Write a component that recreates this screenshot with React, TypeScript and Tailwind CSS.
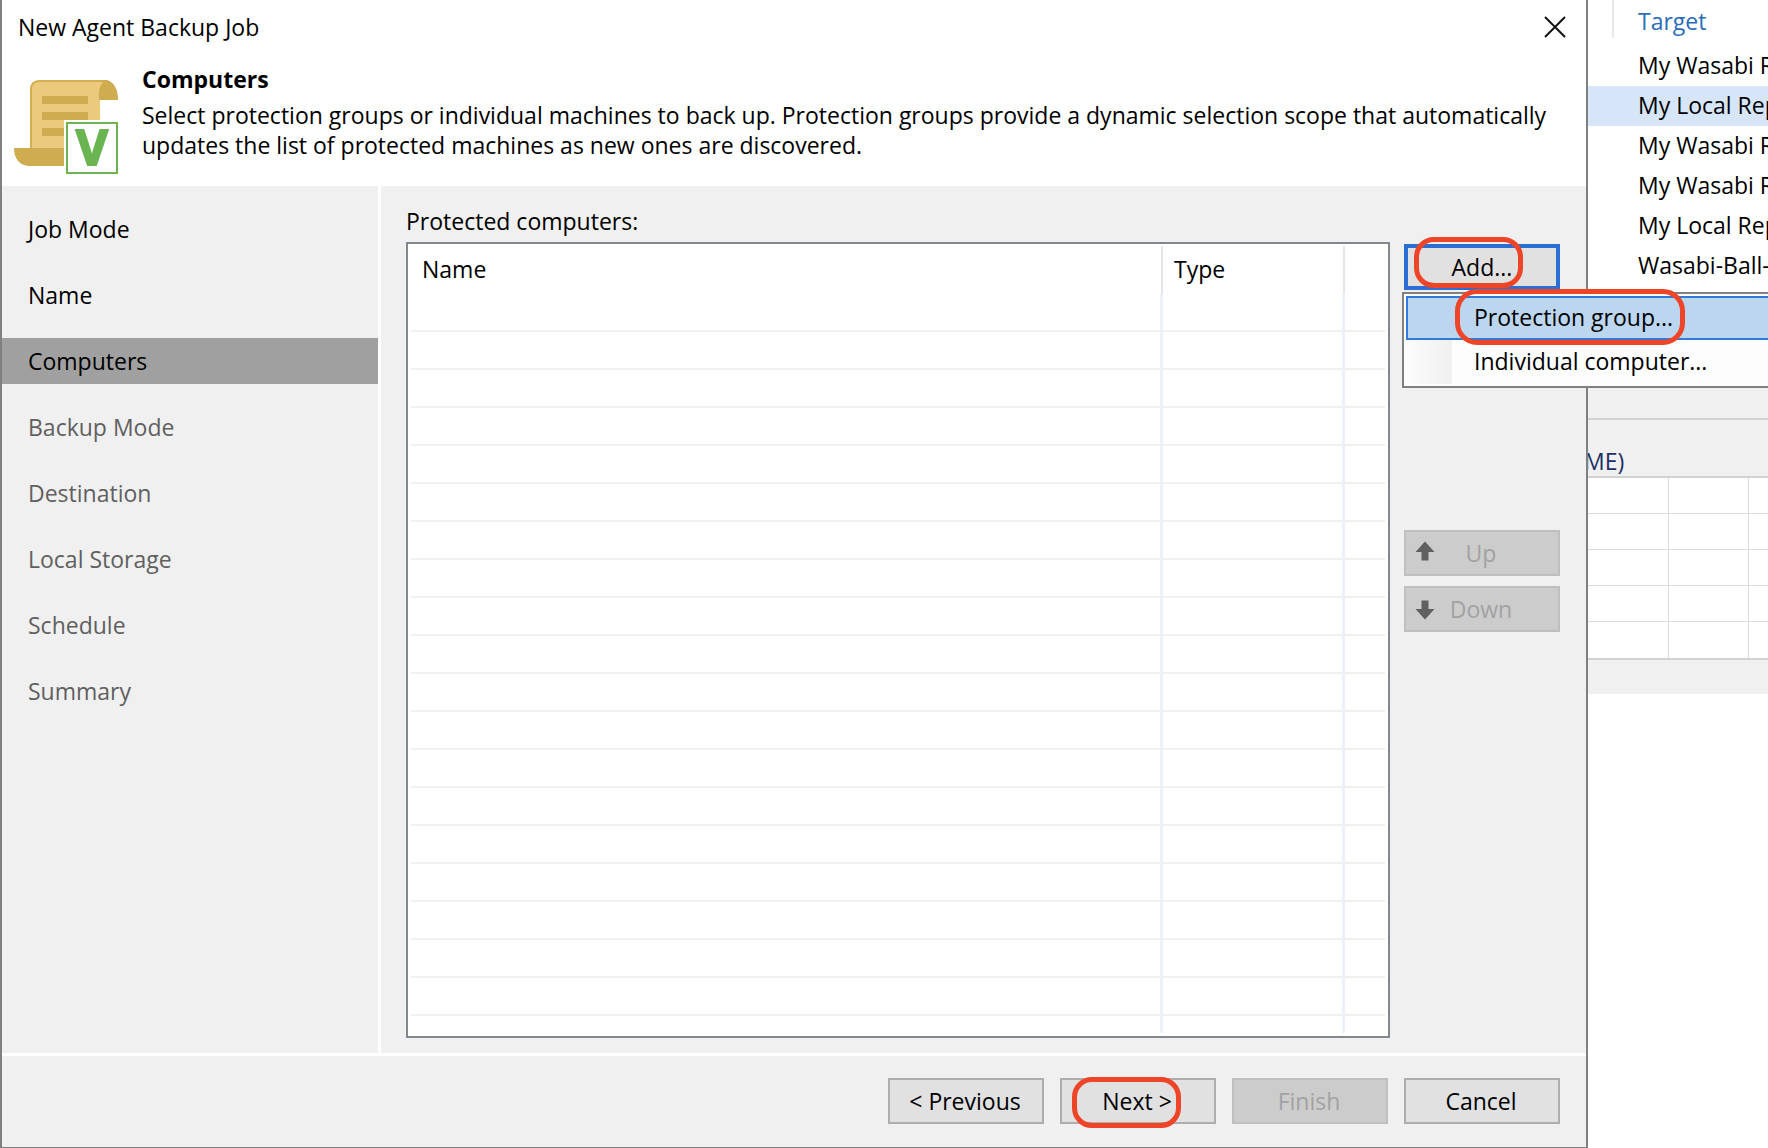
import React from "react";

/* ---------- Data ---------- */
const STEPS = [
  { label: "Job Mode", state: "done" },
  { label: "Name", state: "done" },
  { label: "Computers", state: "active" },
  { label: "Backup Mode", state: "todo" },
  { label: "Destination", state: "todo" },
  { label: "Local Storage", state: "todo" },
  { label: "Schedule", state: "todo" },
  { label: "Summary", state: "todo" },
];

const TARGETS = [
  { id: 1, name: "My Wasabi R" },
  { id: 2, name: "My Local Rep", selected: true },
  { id: 3, name: "My Wasabi R" },
  { id: 4, name: "My Wasabi R" },
  { id: 5, name: "My Local Rep" },
  { id: 6, name: "Wasabi-Ball-" },
];

const EMPTY_ROWS = Array.from({ length: 19 }, (_, i) => i);
const CHART_ROWS = Array.from({ length: 5 }, (_, i) => i);

const stepStyles: Record<string, string> = {
  done: "text-black",
  active: "bg-[#a0a0a0] text-black",
  todo: "text-[#606060]",
};

/* ---------- Icons ---------- */
const JobIcon = () => (
  <svg width="106" height="96" viewBox="14 80 106 96" aria-hidden="true">
    <path d="M30 149V90Q30 80 40 80H108L100 98V149Z" fill="#ebc97d" />
    <path d="M31 149V90Q31 81 40 81H106" fill="none" stroke="#d3ae52" strokeWidth="2" />
    <path d="M99 100C98 90 100 82 107 80C114 82 118 89 118 100Z" fill="#d0ac50" />
    <path d="M14 148H68V166H28C19 165 14 158 14 148Z" fill="#d0ac50" />
    <path d="M42 96H88V104H42ZM42 112H88V120H42ZM42 128H88V136H42Z" fill="#d0ac50" />
    <path d="M64 120H120V176H64Z" fill="#fff" />
    <path d="M67 123H117V173H67Z" fill="#fff" stroke="#6ab551" strokeWidth="2" />
    <text x="92" y="165" textAnchor="middle" fill="#6ab551" stroke="#6ab551" strokeWidth="2" fontSize="49" fontWeight="700" fontFamily="Open Sans, sans-serif">V</text>
  </svg>
);

const ArrowIcon = ({ down = false }: { down?: boolean }) => (
  <svg className={down ? "absolute left-[9px] top-3 rotate-180" : "absolute left-[9px] top-[9px]"} width="20" height="20" viewBox="0 0 20 20" aria-hidden="true">
    <path d="M10 0.5L19.5 11H13.5V19.5H6.5V11H0.5Z" fill="#606060" />
  </svg>
);

/* ---------- Buttons ---------- */
const DialogButton = ({ children, disabled = false }: { children: React.ReactNode; disabled?: boolean }) => (
  <button
    type="button"
    disabled={disabled}
    className="relative flex h-[46px] w-[156px] shrink-0 items-center justify-center border-2 border-[#adadad] bg-[#e1e1e1] pr-[2px] disabled:border-[#bfbfbf] disabled:bg-[#cccccc] disabled:text-[#a2a2a2]"
  >
    {children}
  </button>
);

const AddMenu = () => (
  <div role="menu" className="absolute -left-[2px] top-12 z-20 w-[400px] border-2 border-[#808080] bg-[#fdfdfd] p-[2px]">
    <button type="button" role="menuitem" className="relative flex h-11 w-full items-center border-2 border-[#2f7bd6] bg-[#bcd6f0] pb-[2px] pl-[66px]">
      Protection group...
      <span className="absolute -top-[9px] left-[47px] h-14 w-[230px] rounded-[22px] border-5 border-[#ee4427]" />
    </button>
    <button type="button" role="menuitem" className="flex h-11 w-full items-center">
      <span className="mr-[22px] h-11 w-[46px] bg-linear-to-r from-[#fcfcfc] to-[#f0f0f0]" />
      <span className="pb-[2px]">Individual computer...</span>
    </button>
  </div>
);

/* ---------- Computers list ---------- */
const ComputersTable = () => (
  <div className="border-2 border-[#828790] bg-white px-[3px] pb-[3px] pt-[2px]">
    <table aria-labelledby="protected-label" className="w-full table-fixed border-separate border-spacing-0 text-left">
      <thead>
        <tr className="h-12">
          <th className="border-r-2 border-[#e5e5e5] pl-[11px] pb-[2px] font-normal">Name</th>
          <th className="w-[182px] border-r-2 border-[#e5e5e5] pl-[11px] pb-[2px] font-normal">Type</th>
          <th className="w-10" />
        </tr>
      </thead>
      <tbody>
        {EMPTY_ROWS.map((row) => (
          <tr key={row} className="h-[38px]">
            <td className="border-b-2 border-r-3 border-b-[#f0f0f0] border-r-[#ecf0f8]" />
            <td className="border-b-2 border-r-3 border-b-[#f0f0f0] border-r-[#ecf0f8]" />
            <td className="border-b-2 border-b-[#f0f0f0]" />
          </tr>
        ))}
        <tr className="h-[17px]">
          <td className="border-r-3 border-[#ecf0f8]" />
          <td className="border-r-3 border-[#ecf0f8]" />
          <td />
        </tr>
      </tbody>
    </table>
  </div>
);

/* ---------- Wizard ---------- */
const BackupWizard = () => (
  <section aria-label="New Agent Backup Job" className="relative z-10 flex min-w-0 flex-1 flex-col border-2 border-t-0 border-b border-[#808080] bg-[#f0f0f0]">
    <header className="h-[186px] bg-white">
      <div className="flex h-[54px] items-center justify-between pl-4 pr-5">
        <h1>New Agent Backup Job</h1>
        <button type="button" aria-label="Close">
          <svg width="22" height="22" viewBox="0 0 22 22" aria-hidden="true">
            <path d="M1 1L21 21M21 1L1 21" stroke="#111" strokeWidth="2" />
          </svg>
        </button>
      </div>
      <div className="flex pl-3">
        <div className="pt-[26px]">
          <JobIcon />
        </div>
        <div className="pl-[22px] pt-[10px]">
          <h2 className="font-bold">Computers</h2>
          <p className="mt-[6px]">
            Select protection groups or individual machines to back up. Protection groups provide a dynamic selection scope that automatically
            <br />
            updates the list of protected machines as new ones are discovered.
          </p>
        </div>
      </div>
    </header>

    <div className="flex flex-1">
      <nav aria-label="Steps" className="w-[379px] shrink-0 border-r-3 border-white pt-5">
        <ol className="flex flex-col gap-5">
          {STEPS.map((s) => (
            <li key={s.label} className={`flex h-[46px] items-center pl-[26px] ${stepStyles[s.state]}`}>
              {s.label}
            </li>
          ))}
        </ol>
      </nav>

      <main className="flex min-w-0 flex-1 gap-[14px] pb-[15px] pl-[25px] pr-[26px] pt-5">
        <div className="min-w-0 flex-1">
          <p id="protected-label" className="mb-[6px]">Protected computers:</p>
          <ComputersTable />
        </div>
        <div className="flex flex-col pt-[38px]">
          <div className="relative mb-[240px]">
            <button type="button" aria-haspopup="menu" aria-expanded="true" className="relative flex h-[46px] w-[156px] items-center justify-center border-4 border-[#2a6fd1] bg-[#e1e1e1]">
              Add...
              <span className="absolute -top-[11px] left-[6px] h-[51px] w-[109px] rounded-[20px] border-5 border-[#ee4427]" />
            </button>
            <AddMenu />
          </div>
          <div className="flex flex-col gap-[10px]">
            <DialogButton disabled>
              <ArrowIcon />
              Up
            </DialogButton>
            <DialogButton disabled>
              <ArrowIcon down />
              Down
            </DialogButton>
          </div>
        </div>
      </main>
    </div>

    <footer className="flex justify-end gap-4 border-t-3 border-white pb-[23px] pr-[26px] pt-[22px]">
      <DialogButton>&lt; Previous</DialogButton>
      <DialogButton>
        Next &gt;
        <span className="absolute -top-[3px] left-[10px] h-[51px] w-[109px] rounded-[20px] border-5 border-[#ee4427]" />
      </DialogButton>
      <DialogButton disabled>Finish</DialogButton>
      <DialogButton>Cancel</DialogButton>
    </footer>
  </section>
);

/* ---------- Console window behind the wizard ---------- */
const ConsolePanel = () => (
  <aside className="w-[180px] shrink-0 overflow-hidden bg-white whitespace-nowrap">
    <div className="flex h-[46px] items-start">
      <div className="h-[38px] w-[26px] border-r-2 border-[#e8e8e8]" />
      <h2 className="pl-6 pt-[6px] text-[#2a6ebb]">Target</h2>
    </div>
    <ul className="h-[334px]">
      {TARGETS.map((t) => (
        <li key={t.id} className={`flex h-10 items-center pb-[2px] pl-[50px] ${t.selected ? "bg-[#d6e5f7]" : ""}`}>
          {t.name}
        </li>
      ))}
    </ul>
    <div className="bg-[#f0f0f0] pb-[34px]">
      <div className="h-10 border-b-2 border-[#d2d2d2]" />
      <div className="flex h-14 items-end justify-start text-[#1f2f66]">
        <span className="-ml-1">ME)</span>
      </div>
      <div className="border-y-2 border-[#d2d2d2] bg-white">
        {CHART_ROWS.map((row) => (
          <div key={row} className="flex h-9 border-b border-[#dcdcdc] last:border-b-0">
            <div className="w-[81px] border-r border-[#dcdcdc]" />
            <div className="w-20 border-r border-[#dcdcdc]" />
          </div>
        ))}
      </div>
    </div>
  </aside>
);

export default function App() {
  return (
    <div className="flex min-h-screen overflow-hidden bg-white font-['Open_Sans',sans-serif] text-[23px] leading-[30px] text-black">
      <BackupWizard />
      <ConsolePanel />
    </div>
  );
}
